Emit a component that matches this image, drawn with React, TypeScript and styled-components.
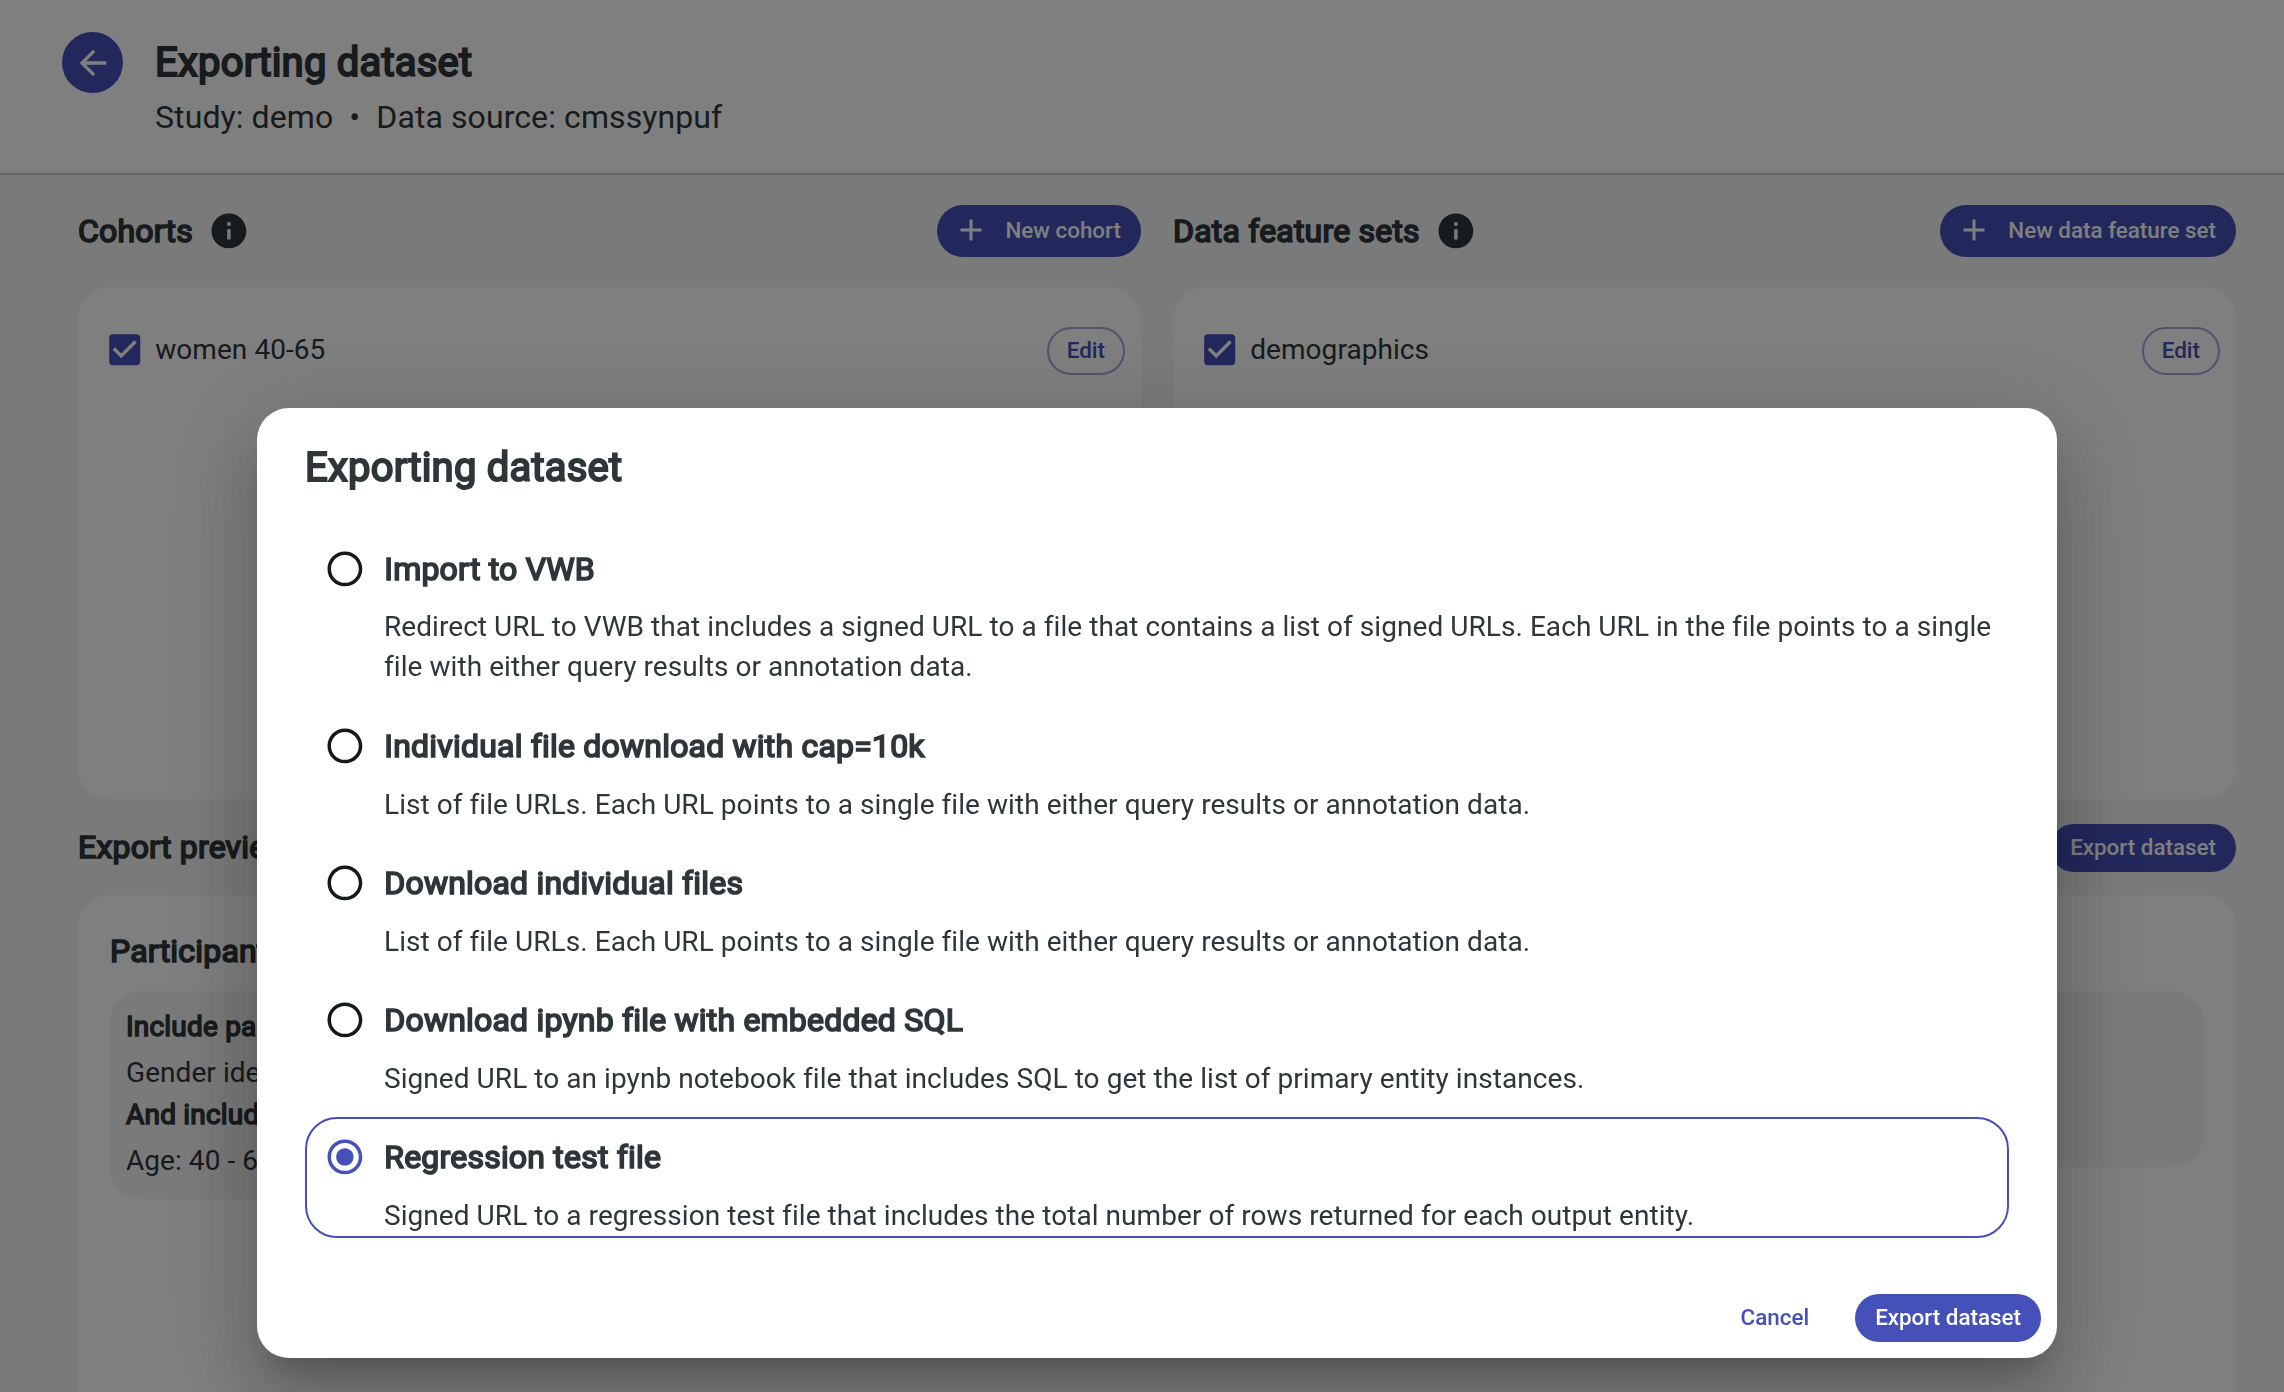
import React from "react";
import styled, { createGlobalStyle } from "styled-components";

const Global = createGlobalStyle`
  *, *::before, *::after { box-sizing: border-box; }
  html, body { margin: 0; height: 100%; overflow: hidden; }
  body {
    background: #f4f4f4;
    color: #2f363a;
    font: 400 28px/40px Roboto, sans-serif;
    letter-spacing: 0.062px;
  }
  button { font-family: inherit; cursor: pointer; }
`;

const PRIMARY = "#4550b9";

const Page = styled.div`
  height: 1392px;
  display: flex;
  flex-direction: column;
  overflow: hidden;
`;

const Header = styled.header`
  display: flex;
  flex: none;
  height: 175px;
  padding: 32px 0 0 62px;
  gap: 32px;
  background: #fff;
  border-bottom: 2px solid #c6c6c6;
`;

const BackButton = styled.button`
  display: flex;
  align-items: center;
  justify-content: center;
  width: 61px;
  height: 61px;
  padding: 0;
  border: 0;
  border-radius: 50%;
  color: #fff;
  background: ${PRIMARY};
`;

const HeaderText = styled.div`
  display: flex;
  flex-direction: column;
  padding-top: 1px;
`;

const Title = styled.h1`
  margin: 0;
  font-size: 40px;
  font-weight: 400;
  line-height: 60px;
  letter-spacing: 0.2px;
  -webkit-text-stroke: 2px currentColor;
`;

const Subtitle = styled.p`
  margin: 0;
  font-size: 32px;
  line-height: 48px;
  letter-spacing: 0.09px;
  white-space: pre;
`;

const Body = styled.main`
  display: flex;
  flex-direction: column;
  flex: 1;
  min-height: 0;
  padding: 0 48px 0 78px;
`;

const Columns = styled.div`
  display: grid;
  grid-template-columns: 1fr 1fr;
  gap: 32px;
`;

const SectionBar = styled.div`
  display: flex;
  align-items: center;
  justify-content: space-between;
  height: 112px;
`;

const Heading = styled.h2`
  display: flex;
  align-items: center;
  gap: 15.5px;
  margin: 0;
  font-size: 32px;
  font-weight: 400;
  line-height: 48px;
  letter-spacing: 0.2px;
  -webkit-text-stroke: 1.7px currentColor;
  svg { stroke: none; }
`;

const Button = styled.button<{ $variant?: "outlined" | "text"; $tall?: boolean }>`
  display: flex;
  align-items: center;
  gap: 16px;
  height: ${(p) => (p.$tall ? 52 : 48)}px;
  padding: 0 ${(p) => (p.$variant === "outlined" ? 18 : 20)}px 2px
    ${(p) => (p.$tall ? 16 : p.$variant === "outlined" ? 18 : 20)}px;
  border: ${(p) => (p.$variant === "outlined" ? "2px solid rgba(69, 80, 185, 0.5)" : "0")};
  border-radius: 32px;
  font-size: 22.4px;
  font-weight: 500;
  line-height: 38px;
  letter-spacing: 0;
  white-space: nowrap;
  color: ${(p) => (p.$variant ? PRIMARY : "#fff")};
  background: ${(p) => (p.$variant ? "transparent" : PRIMARY)};
`;

const PreviewBar = styled(SectionBar)`
  height: 96px;
  ${Button} { margin-top: 2px; }
`;

const ListCard = styled.section`
  height: 512px;
  padding: 40px 16px 0 32px;
  border-radius: 32px;
  background: #fff;
`;

const ListRow = styled.div`
  display: flex;
  align-items: center;
  height: 48px;
`;

const CheckLabel = styled.label`
  display: flex;
  flex: 1;
  align-items: center;
  gap: 10px;
  height: 42px;
  margin: -3px 0 0 -6.2px;
`;

const PreviewCard = styled.section`
  flex: 1;
  padding: 32px 32px 0;
  border-radius: 32px 32px 0 0;
  background: #fff;
`;

const PreviewHeading = styled(Heading)`
  height: 48px;
  margin-bottom: 16px;
`;

const Criteria = styled.div`
  width: 1031px;
  height: 208px;
  padding: 15px 16px 0;
  border-radius: 32px;
  background: #f4f4f4;
`;

const CriteriaBlank = styled(Criteria)`
  height: 176px;
`;

const CriteriaColumns = styled.div`
  display: grid;
  grid-template-columns: 1031px 1031px;
  gap: 32px;
  align-items: start;
`;

const CriteriaName = styled.div`
  line-height: 42px;
  letter-spacing: 0.2px;
  -webkit-text-stroke: 1.5px currentColor;
`;

const CriteriaValue = styled.div`
  padding-top: 4px;
  line-height: 42px;
`;

const Backdrop = styled.div`
  position: fixed;
  inset: 0;
  padding: 408px 0 0 257px;
  background: rgba(0, 0, 0, 0.5);
`;

const Dialog = styled.div`
  display: flex;
  flex-direction: column;
  width: 1800px;
  height: 950px;
  border-radius: 32px;
  background: #fff;
  box-shadow:
    0 22px 30px -14px rgba(0, 0, 0, 0.2),
    0 48px 76px 6px rgba(0, 0, 0, 0.14),
    0 18px 92px 16px rgba(0, 0, 0, 0.12);
`;

const DialogTitle = styled(Title)`
  padding: 30px 48px 30.4px;
`;

const Options = styled.div`
  display: flex;
  flex-direction: column;
  flex: 1;
  gap: 16px;
  padding: 0 48px;
`;

const Option = styled.div<{ $selected: boolean }>`
  padding: 0 8px 0 17.2px;
  border: 2px solid ${(p) => (p.$selected ? PRIMARY : "transparent")};
  border-radius: 32px;
`;

const OptionHead = styled.label`
  display: flex;
  align-items: center;
  gap: 18.3px;
  height: 77px;
  font-size: 32px;
  letter-spacing: 0.2px;
`;

const OptionName = styled.span`
  -webkit-text-stroke: 1.7px currentColor;
`;

const OptionText = styled.p`
  margin: 0;
  padding-left: 59.8px;
  line-height: 40.1px;
`;

const Actions = styled.div`
  display: flex;
  justify-content: flex-end;
  gap: 26px;
  padding: 0 16px 16px;
`;

const IconSvg = styled.svg`
  flex: none;
`;

const Icon = ({ d, size = 41.8, color = "currentColor" }: { d: string; size?: number; color?: string }) => (
  <IconSvg width={size} height={size} viewBox="0 0 24 24" fill={color}>
    <path d={d} />
  </IconSvg>
);

const ARROW = "M20 11H7.83l5.59-5.59L12 4l-8 8 8 8 1.41-1.41L7.83 13H20v-2z";
const INFO = "M12 2C6.48 2 2 6.48 2 12s4.48 10 10 10 10-4.48 10-10S17.52 2 12 2zm1 15h-2v-6h2v6zm0-8h-2V7h2v2z";
const PLUS = "M19 13h-6v6h-2v-6H5v-2h6V5h2v6h6v2z";
const CHECK =
  "M19 3H5c-1.11 0-2 .9-2 2v14c0 1.1.89 2 2 2h14c1.11 0 2-.9 2-2V5c0-1.1-.89-2-2-2zm-9 14l-5-5 1.41-1.41L10 14.17l7.59-7.59L19 8l-9 9z";
const RING =
  "M12 2C6.48 2 2 6.48 2 12s4.48 10 10 10 10-4.48 10-10S17.52 2 12 2zm0 18c-4.42 0-8-3.58-8-8s3.58-8 8-8 8 3.58 8 8-3.58 8-8 8z";
const DOT = " M12 7c-2.76 0-5 2.24-5 5s2.24 5 5 5 5-2.24 5-5-2.24-5-5-5z";

const LISTS = [
  { heading: "Cohorts", action: "New cohort", item: "women 40-65" },
  { heading: "Data feature sets", action: "New data feature set", item: "demographics" },
];

const OPTIONS = [
  {
    name: "Import to VWB",
    text: "Redirect URL to VWB that includes a signed URL to a file that contains a list of signed URLs. Each URL in the file points to a single file with either query results or annotation data.",
  },
  {
    name: "Individual file download with cap=10k",
    text: "List of file URLs. Each URL points to a single file with either query results or annotation data.",
  },
  {
    name: "Download individual files",
    text: "List of file URLs. Each URL points to a single file with either query results or annotation data.",
  },
  {
    name: "Download ipynb file with embedded SQL",
    text: "Signed URL to an ipynb notebook file that includes SQL to get the list of primary entity instances.",
  },
  {
    name: "Regression test file",
    text: "Signed URL to a regression test file that includes the total number of rows returned for each output entity.",
    selected: true,
  },
];

export default function App() {
  return (
    <>
      <Global />
      <Page>
        <Header>
          <BackButton aria-label="Back">
            <Icon d={ARROW} size={40} />
          </BackButton>
          <HeaderText>
            <Title>Exporting dataset</Title>
            <Subtitle>{"Study: demo  •  Data source: cmssynpuf"}</Subtitle>
          </HeaderText>
        </Header>
        <Body>
          <Columns>
            {LISTS.map((list) => (
              <div key={list.heading}>
                <SectionBar>
                  <Heading>
                    {list.heading}
                    <Icon d={INFO} />
                  </Heading>
                  <Button $tall>
                    <Icon d={PLUS} size={36} />
                    {list.action}
                  </Button>
                </SectionBar>
                <ListCard>
                  <ListRow>
                    <CheckLabel>
                      <Icon d={CHECK} size={41.4} color={PRIMARY} />
                      {list.item}
                    </CheckLabel>
                    <Button $variant="outlined">Edit</Button>
                  </ListRow>
                </ListCard>
              </div>
            ))}
          </Columns>
          <PreviewBar>
            <Heading>Export preview</Heading>
            <Button>Export dataset</Button>
          </PreviewBar>
          <PreviewCard>
            <PreviewHeading>Participants</PreviewHeading>
            <CriteriaColumns>
              <Criteria>
                <CriteriaName>Include part</CriteriaName>
                <CriteriaValue>Gender identity</CriteriaValue>
                <CriteriaName>And include</CriteriaName>
                <CriteriaValue>Age: 40 - 65</CriteriaValue>
              </Criteria>
              <CriteriaBlank />
            </CriteriaColumns>
          </PreviewCard>
        </Body>
      </Page>
      <Backdrop>
        <Dialog role="dialog">
          <DialogTitle as="h2">Exporting dataset</DialogTitle>
          <Options>
            {OPTIONS.map((o) => (
              <Option key={o.name} $selected={!!o.selected}>
                <OptionHead>
                  <Icon d={o.selected ? RING + DOT : RING} color={o.selected ? PRIMARY : "#15191c"} />
                  <OptionName>{o.name}</OptionName>
                </OptionHead>
                <OptionText>{o.text}</OptionText>
              </Option>
            ))}
          </Options>
          <Actions>
            <Button $variant="text">Cancel</Button>
            <Button>Export dataset</Button>
          </Actions>
        </Dialog>
      </Backdrop>
    </>
  );
}
